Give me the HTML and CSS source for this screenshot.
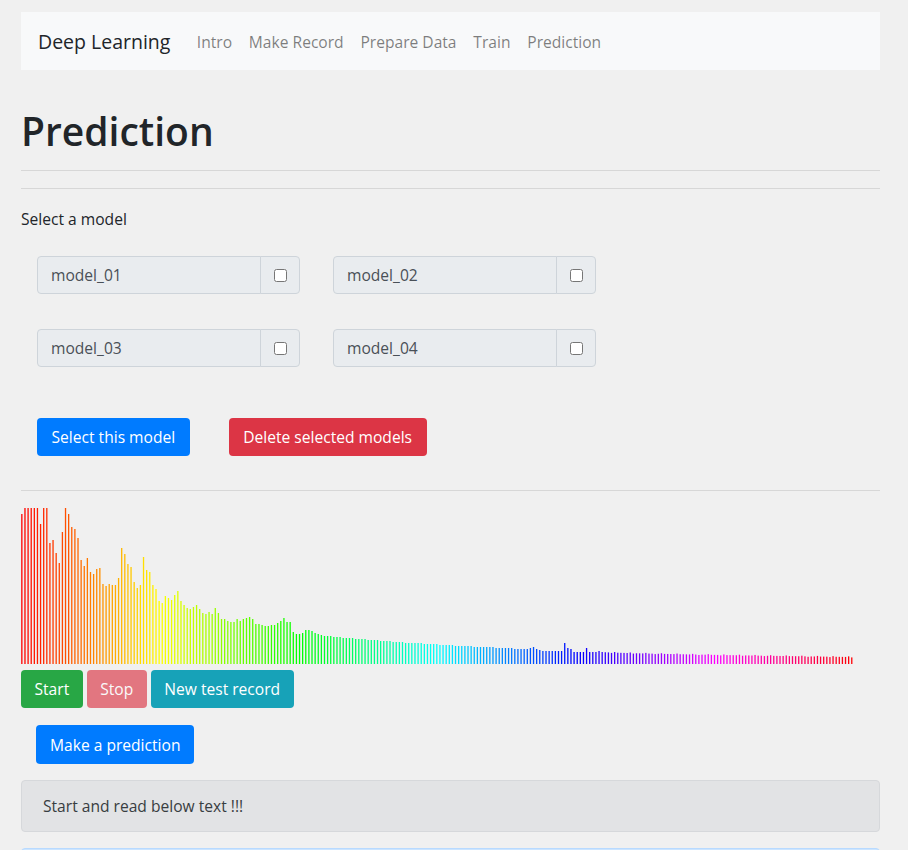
FILE: index.html
```html
<!DOCTYPE html>
<html lang="en">
<head>
<meta charset="utf-8">
<title>Deep Learning - Prediction</title>
<link rel="stylesheet" href="styles.css">
</head>
<body>
<div class="page">
  <nav class="navbar">
    <a class="brand" href="#">Deep Learning</a>
    <ul class="nav">
      <li><a class="nav-link" href="#">Intro</a></li>
      <li><a class="nav-link" href="#">Make Record</a></li>
      <li><a class="nav-link" href="#">Prepare Data</a></li>
      <li><a class="nav-link" href="#">Train</a></li>
      <li><a class="nav-link" href="#">Prediction</a></li>
    </ul>
  </nav>

  <h1 class="title">Prediction</h1>
  <hr class="rule rule-first">
  <hr class="rule rule-second">

  <p class="label">Select a model</p>
  <div class="models">
    <div class="input-group"><input class="model-name" value="model_01" readonly><span class="addon"><input class="check" type="checkbox"></span></div>
    <div class="input-group"><input class="model-name" value="model_02" readonly><span class="addon"><input class="check" type="checkbox"></span></div>
    <div class="input-group"><input class="model-name" value="model_03" readonly><span class="addon"><input class="check" type="checkbox"></span></div>
    <div class="input-group"><input class="model-name" value="model_04" readonly><span class="addon"><input class="check" type="checkbox"></span></div>
  </div>

  <div class="actions">
    <button class="btn btn-primary">Select this model</button>
    <button class="btn btn-danger">Delete selected models</button>
  </div>

  <hr class="rule rule-third">

  <canvas id="spectrum" class="spectrum" width="859" height="156"></canvas>

  <div class="controls">
    <button class="btn btn-success">Start</button>
    <button class="btn btn-danger btn-disabled">Stop</button>
    <button class="btn btn-info">New test record</button>
  </div>

  <div class="predict">
    <button class="btn btn-primary">Make a prediction</button>
  </div>

  <div class="alert alert-secondary">Start and read below text !!!</div>
  <div class="alert alert-primary alert-empty"></div>
</div>
<script src="app.js"></script>
</body>
</html>
```
FILE: styles.css
```css
* { box-sizing: border-box; }

body {
  margin: 0;
  background: #f0f0f0;
  font-family: "Open Sans", "Noto Sans", sans-serif;
  font-size: 15.6px;
  line-height: 24px;
  color: #212529;
}

.page {
  width: 859px;
  margin-left: 21px;
  padding-top: 12px;
}

/* navbar */
.navbar {
  display: flex;
  align-items: center;
  height: 58px;
  padding: 2px 17px 0;
  background: #f8f9fa;
}
.brand {
  font-size: 19.5px;
  line-height: 30px;
  color: #212529;
  text-decoration: none;
  margin-right: 18px;
}
.nav {
  display: flex;
  margin: 0;
  padding: 0;
  list-style: none;
}
.nav-link {
  display: block;
  padding: 0 8.4px;
  color: rgba(0, 0, 0, 0.5);
  text-decoration: none;
}

/* heading & rules */
.title {
  margin: 37px 0 0;
  font-size: 39px;
  font-weight: 600;
  line-height: 48px;
  color: #212529;
}
.rule {
  height: 0;
  margin: 0;
  border: 0;
  border-top: 1px solid rgba(0, 0, 0, 0.1);
}
.rule-first { margin-top: 15px; }
.rule-second { margin-top: 17px; }
.rule-third { margin-top: 34px; }

.label {
  margin: 18px 0 0;
}

/* model list */
.models {
  display: grid;
  grid-template-columns: 263px 263px;
  column-gap: 33px;
  row-gap: 35px;
  margin-top: 25px;
  padding-left: 16px;
}
.input-group {
  display: flex;
  height: 38px;
}
.model-name {
  width: 224px;
  height: 38px;
  margin: 0;
  padding: 0 13px;
  font: inherit;
  color: #495057;
  background: #e9ecef;
  border: 1px solid #ced4da;
  border-radius: 4px 0 0 4px;
  outline: none;
}
.addon {
  display: flex;
  align-items: center;
  justify-content: center;
  width: 40px;
  height: 38px;
  margin-left: -1px;
  background: #e9ecef;
  border: 1px solid #ced4da;
  border-radius: 0 4px 4px 0;
}
.check {
  width: 13px;
  height: 13px;
  margin: 0;
}

/* buttons */
.btn {
  height: 38px;
  padding: 0 13.5px;
  font: inherit;
  line-height: 38px;
  color: #fff;
  border: 0;
  border-radius: 4px;
  cursor: pointer;
}
.btn-primary { background: #007bff; }
.btn-danger { background: #dc3545; }
.btn-success { background: #28a745; }
.btn-info { background: #17a2b8; }
.btn-disabled { opacity: 0.65; }

.actions {
  display: flex;
  gap: 39px;
  margin-top: 51px;
  padding-left: 16px;
}
.actions .btn { padding: 0 14.5px; }

.spectrum {
  display: block;
  width: 859px;
  height: 156px;
  margin-top: 17px;
}

.controls {
  display: flex;
  gap: 4px;
  margin-top: 6px;
}

.predict {
  margin-top: 17px;
  padding-left: 15px;
}
.predict .btn { height: 39px; padding: 0 14px; }

/* alerts */
.alert {
  margin-top: 16px;
  padding: 13px 21px;
  border: 1px solid transparent;
  border-radius: 4px;
}
.alert-secondary {
  color: #383d41;
  background: #e2e3e5;
  border-color: #d6d8db;
}
.alert-primary {
  color: #004085;
  background: #cce5ff;
  border-color: #b8daff;
}
.alert-empty {
  height: 52px;
}
```
FILE: app.js
```js
(function () {
  var canvas = document.getElementById('spectrum');
  var ctx = canvas.getContext('2d');
  var TOP = 508, BOTTOM = 664;

  var tops = [
    514,508,508,508,508,508,524,508,508,543,
    540,553,563,532,508,514,527,529,538,560,
    566,558,572,574,569,568,584,586,584,585,
    585,578,548,554,564,567,582,588,585,557,
    570,572,585,589,601,603,596,598,600,595,
    591,601,605,608,609,607,605,609,613,614,
    612,614,608,613,619,619,621,622,622,619,
    621,619,618,617,619,624,624,625,626,626,
    625,625,623,621,618,622,622,632,634,634,
    633,630,630,631,633,634,635,636,636,636,
    637,637,637,638,638,638,638,639,639,639,
    639,640,640,640,640,641,641,641,641,642,
    642,642,642,643,643,643,643,643,643,644,
    644,644,644,644,645,645,645,645,645,646,
    646,646,646,646,646,647,647,647,647,647,
    647,647,648,648,648,648,648,648,649,649,
    649,649,649,648,647,649,650,651,651,651,
    651,651,651,651,643,648,649,652,652,652,
    652,648,652,652,652,651
  ];
  var total = 267;
  for (var i = tops.length; i < total; i++) {
    var t = (i - 186) / 80;
    var v = 652 + 5 * Math.pow(Math.max(t, 0), 0.7);
    v += ((i * 37) % 5 === 0) ? -0.6 : ((i * 13) % 7 === 0 ? 0.4 : 0);
    tops.push(v);
  }

  var step = 3.12;
  var w = 1.3;
  for (var k = 0; k < total; k++) {
    var y = Math.max(tops[k], TOP) - TOP;
    var h = (BOTTOM - TOP) - y;
    ctx.fillStyle = 'hsl(' + (k / total * 360) + ', 100%, 50%)';
    ctx.fillRect(k * step + 0.2, y, w, h);
  }
})();
```
